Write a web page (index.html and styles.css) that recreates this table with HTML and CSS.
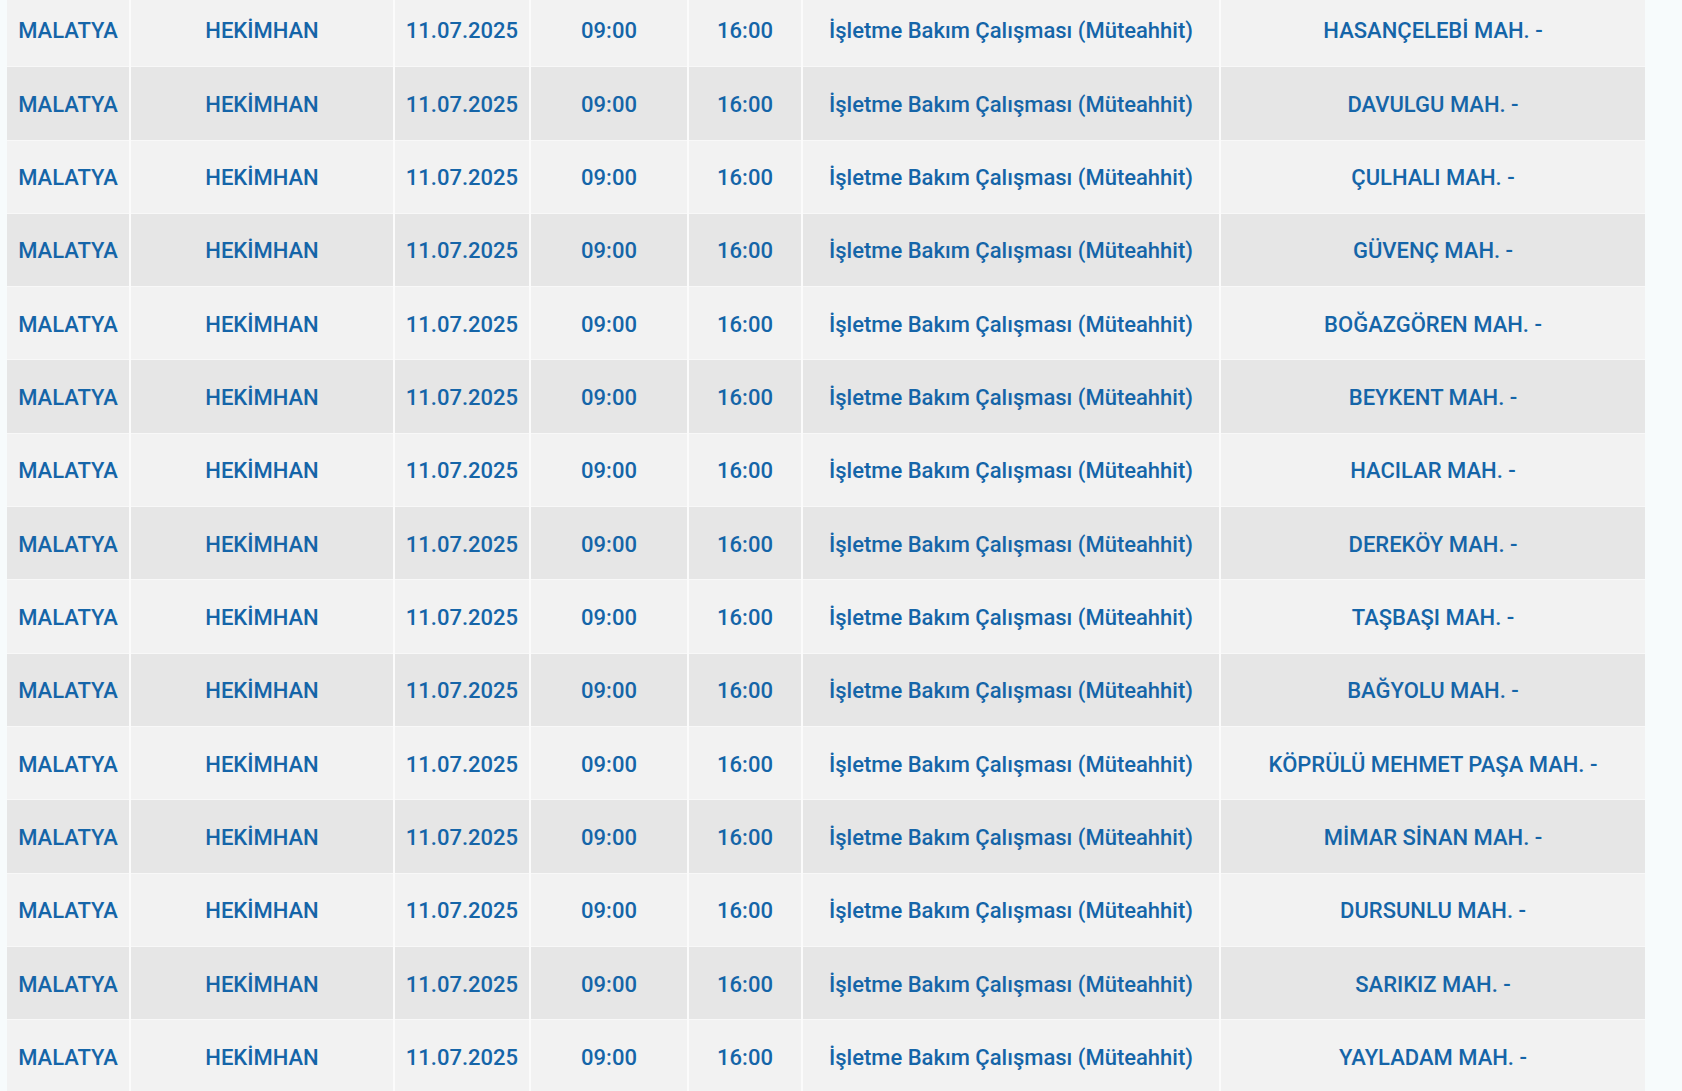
FILE: index.html
```html
<!DOCTYPE html>
<html lang="tr">
<head>
<meta charset="utf-8">
<title>Planlı Kesintiler</title>
<link rel="stylesheet" href="styles.css">
</head>
<body>
<div class="page">
<table class="outages">
<colgroup>
<col class="c-il"><col class="c-ilce"><col class="c-tarih"><col class="c-bas"><col class="c-bit"><col class="c-neden"><col class="c-yer">
</colgroup>
<tbody>
<tr><td>MALATYA</td><td>HEKİMHAN</td><td>11.07.2025</td><td>09:00</td><td>16:00</td><td>İşletme Bakım Çalışması (Müteahhit)</td><td>HASANÇELEBİ MAH. -</td></tr>
<tr><td>MALATYA</td><td>HEKİMHAN</td><td>11.07.2025</td><td>09:00</td><td>16:00</td><td>İşletme Bakım Çalışması (Müteahhit)</td><td>DAVULGU MAH. -</td></tr>
<tr><td>MALATYA</td><td>HEKİMHAN</td><td>11.07.2025</td><td>09:00</td><td>16:00</td><td>İşletme Bakım Çalışması (Müteahhit)</td><td>ÇULHALI MAH. -</td></tr>
<tr><td>MALATYA</td><td>HEKİMHAN</td><td>11.07.2025</td><td>09:00</td><td>16:00</td><td>İşletme Bakım Çalışması (Müteahhit)</td><td>GÜVENÇ MAH. -</td></tr>
<tr><td>MALATYA</td><td>HEKİMHAN</td><td>11.07.2025</td><td>09:00</td><td>16:00</td><td>İşletme Bakım Çalışması (Müteahhit)</td><td>BOĞAZGÖREN MAH. -</td></tr>
<tr><td>MALATYA</td><td>HEKİMHAN</td><td>11.07.2025</td><td>09:00</td><td>16:00</td><td>İşletme Bakım Çalışması (Müteahhit)</td><td>BEYKENT MAH. -</td></tr>
<tr><td>MALATYA</td><td>HEKİMHAN</td><td>11.07.2025</td><td>09:00</td><td>16:00</td><td>İşletme Bakım Çalışması (Müteahhit)</td><td>HACILAR MAH. -</td></tr>
<tr><td>MALATYA</td><td>HEKİMHAN</td><td>11.07.2025</td><td>09:00</td><td>16:00</td><td>İşletme Bakım Çalışması (Müteahhit)</td><td>DEREKÖY MAH. -</td></tr>
<tr><td>MALATYA</td><td>HEKİMHAN</td><td>11.07.2025</td><td>09:00</td><td>16:00</td><td>İşletme Bakım Çalışması (Müteahhit)</td><td>TAŞBAŞI MAH. -</td></tr>
<tr><td>MALATYA</td><td>HEKİMHAN</td><td>11.07.2025</td><td>09:00</td><td>16:00</td><td>İşletme Bakım Çalışması (Müteahhit)</td><td>BAĞYOLU MAH. -</td></tr>
<tr><td>MALATYA</td><td>HEKİMHAN</td><td>11.07.2025</td><td>09:00</td><td>16:00</td><td>İşletme Bakım Çalışması (Müteahhit)</td><td>KÖPRÜLÜ MEHMET PAŞA MAH. -</td></tr>
<tr><td>MALATYA</td><td>HEKİMHAN</td><td>11.07.2025</td><td>09:00</td><td>16:00</td><td>İşletme Bakım Çalışması (Müteahhit)</td><td>MİMAR SİNAN MAH. -</td></tr>
<tr><td>MALATYA</td><td>HEKİMHAN</td><td>11.07.2025</td><td>09:00</td><td>16:00</td><td>İşletme Bakım Çalışması (Müteahhit)</td><td>DURSUNLU MAH. -</td></tr>
<tr><td>MALATYA</td><td>HEKİMHAN</td><td>11.07.2025</td><td>09:00</td><td>16:00</td><td>İşletme Bakım Çalışması (Müteahhit)</td><td>SARIKIZ MAH. -</td></tr>
<tr><td>MALATYA</td><td>HEKİMHAN</td><td>11.07.2025</td><td>09:00</td><td>16:00</td><td>İşletme Bakım Çalışması (Müteahhit)</td><td>YAYLADAM MAH. -</td></tr>
</tbody>
</table>
</div>
</body>
</html>
```

FILE: styles.css
```css
html, body {
  margin: 0;
  padding: 0;
  background: #f7fbfc;
  overflow: hidden;
}

.page {
  padding-left: 7px;
  margin-top: -6.67px;
}

.outages {
  width: 1638px;
  border-collapse: collapse;
  table-layout: fixed;
  font-family: Roboto, "Liberation Sans", Arial, sans-serif;
  font-size: 22px;
  font-weight: 500;
  color: #1565a8;
}

.c-il { width: 123px; }
.c-ilce { width: 264px; }
.c-tarih { width: 136px; }
.c-bas { width: 158px; }
.c-bit { width: 114px; }
.c-neden { width: 418px; }
.c-yer { width: 425px; }

.outages tr {
  height: 73.33px;
}

.outages tr:nth-child(odd) td {
  background: #f2f2f2;
}

.outages tr:nth-child(even) td {
  background: #e6e6e6;
}

.outages td {
  padding: 2px 0 0;
  text-align: center;
  vertical-align: middle;
  white-space: nowrap;
  border-right: 2px solid #fbfbfb;
  border-bottom: 1px solid #f8f8f8;
}

.outages td:last-child {
  border-right: none;
}
```
